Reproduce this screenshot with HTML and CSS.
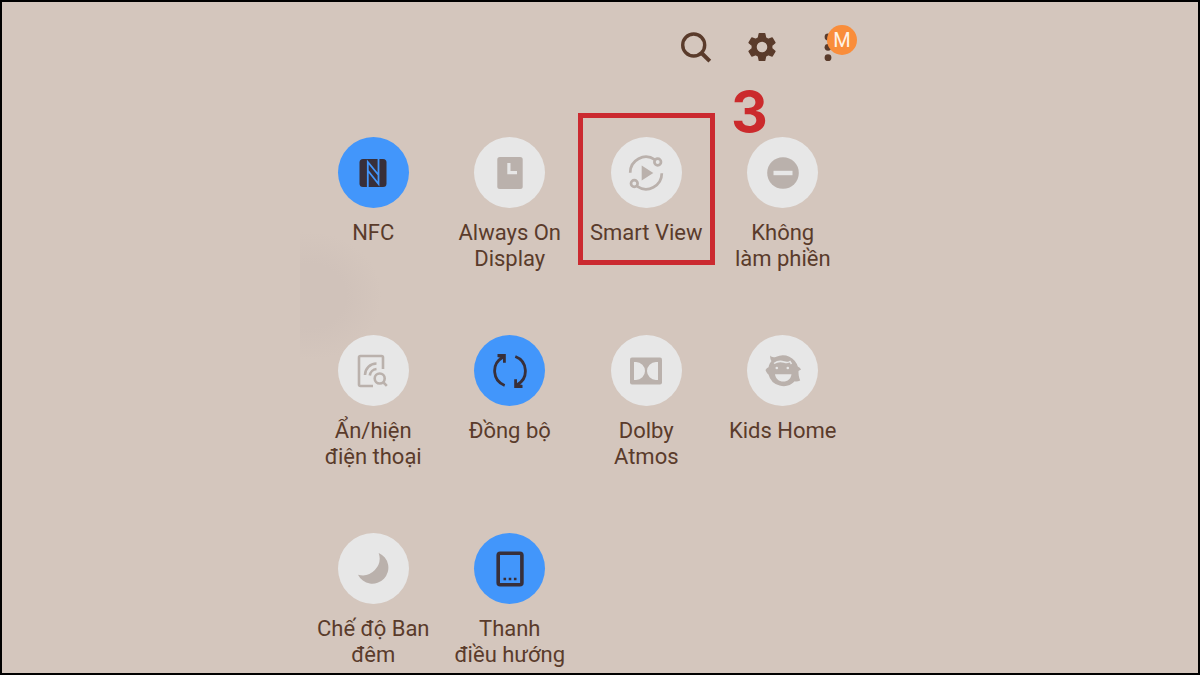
FILE: index.html
```html
<!DOCTYPE html>
<html lang="vi">
<head>
<meta charset="utf-8">
<meta name="viewport" content="width=device-width, initial-scale=1">
<title>Smart View</title>
<link rel="stylesheet" href="styles.css">
</head>
<body>
<main class="panel">
  <header class="toolbar">
    <button class="tool" type="button" aria-label="Search">
      <svg viewBox="0 0 32 32" fill="none" stroke="currentColor" stroke-width="3.4"><circle cx="13.7" cy="14" r="11"/><path d="M21.5 22l8.3 8.2" stroke-width="4"/></svg>
    </button>
    <button class="tool" type="button" aria-label="Settings">
      <svg viewBox="0 0 32 32" fill="currentColor"><path fill-rule="evenodd" stroke="currentColor" stroke-width="1.4" stroke-linejoin="round" d="M13.3 2.7h5.4l.9 4.2 2.6 1.5 4-1.4 2.7 4.7-3.2 2.8v3l3.2 2.8-2.7 4.7-4-1.4-2.6 1.5-.9 4.2h-5.4l-.9-4.2-2.6-1.5-4 1.4-2.7-4.7 3.2-2.8v-3l-3.2-2.8L5.8 7l4 1.4 2.6-1.5zM16 10a6 6 0 1 0 0 12a6 6 0 1 0 0-12z"/></svg>
    </button>
    <button class="tool" type="button" aria-label="More">
      <svg viewBox="0 0 32 32" fill="currentColor"><circle cx="16" cy="6" r="3.4"/><circle cx="16" cy="16.3" r="3.4"/><circle cx="16" cy="26.7" r="3.4"/></svg>
      <span class="badge">M</span>
    </button>
  </header>

  <section class="tiles">
    <button class="tile" type="button">
      <span class="disc on"><svg viewBox="0 0 44 44"><rect x="8.5" y="8" width="27" height="28" rx="3.5" fill="currentColor"/><path d="M16.800 36.500V11l10.700 13M27.500 7.500V33L16.800 19.500" fill="none" stroke="#4296fb" stroke-width="1.800"/></svg></span>
      <span class="label">NFC</span>
    </button>
    <button class="tile" type="button">
      <span class="disc"><svg viewBox="0 0 44 44" fill="currentColor"><rect x="9.3" y="6" width="25.4" height="32" rx="2.5"/><path d="M19.3 12h3.2v8h6.5v3.3h-9.7z" fill="#e7e7e7"/></svg></span>
      <span class="label">Always On<br>Display</span>
    </button>
    <button class="tile marked" type="button">
      <span class="disc"><svg viewBox="0 0 44 44" fill="none" stroke="currentColor" stroke-width="2.7"><path d="M6.2 21.7A15.8 15.8 0 0 1 30.8 8.6M37.8 22.3A15.8 15.8 0 0 1 13.2 35.4"/><circle cx="33.7" cy="11" r="3.3"/><circle cx="10.3" cy="32.5" r="3.3"/><path d="M17.7 14.5v15l11.6-7.5z" fill="currentColor" stroke="none"/></svg></span>
      <span class="label">Smart View</span>
      <span class="step">3</span>
    </button>
    <button class="tile" type="button">
      <span class="disc"><svg viewBox="0 0 44 44"><circle cx="22" cy="22" r="15.8" fill="currentColor"/><path d="M12.5 19.8h19v4.4h-19z" fill="#e7e7e7"/></svg></span>
      <span class="label">Không<br>làm phiền</span>
    </button>
    <button class="tile" type="button">
      <span class="disc"><svg viewBox="0 0 44 44" fill="none" stroke="currentColor" stroke-width="2.6"><path d="M32 20V8.5A1.5 1.5 0 0 0 30.5 7h-21A1.5 1.5 0 0 0 8 8.5v27A1.5 1.5 0 0 0 9.5 37H22"/><path d="M14 26A11.5 11.5 0 0 1 25.5 14.5M18.8 26.5a7.5 7.5 0 0 1 6.7-6.5"/><circle cx="28.7" cy="29.5" r="5"/><path d="M32 33l3.8 3.8"/></svg></span>
      <span class="label">Ẩn/hiện<br>điện thoại</span>
    </button>
    <button class="tile" type="button">
      <span class="disc on"><svg viewBox="0 0 44 44" fill="none" stroke="currentColor" stroke-width="2.8"><path d="M16.7 36.5A15.5 15.5 0 0 1 14.5 8.5M27.3 7.5A15.5 15.5 0 0 1 29.5 35.5"/><path d="M9.5 5h8.3v8.7h-2.8V9.5L9.500 8zM34.500 39h-8.300v-8.700h2.800v4.200l5.500 1.500z" fill="currentColor" stroke="none"/></svg></span>
      <span class="label">Đồng bộ</span>
    </button>
    <button class="tile" type="button">
      <span class="disc"><svg viewBox="0 0 44 44"><rect x="6" y="8.5" width="32" height="27" rx="2" fill="currentColor"/><path d="M10 13h2a9 9 0 0 1 0 18h-2zM34 13h-2a9 9 0 0 0 0 18h2z" fill="#e7e7e7"/></svg></span>
      <span class="label">Dolby<br>Atmos</span>
    </button>
    <button class="tile" type="button">
      <span class="disc"><svg viewBox="0 0 44 44"><path fill="currentColor" d="M9.300 6.500c1 1.700 3.300 2.200 6 1.200A15.500 15.500 0 0 1 36.800 17.500c1.500.8 2.700 1.800 3.200 3-.8.700-2 1-2.500 1.500 0 3.500.2 6 1.700 9.500-2 1-4 1.200-5.500.8A15.500 15.500 0 0 1 7.500 25.500c-1.200-1-2.500-2.700-3-4.500.8-1.300 1.800-2.300 3-2.800.6-2.500 1.500-4.300 3-6.200-1-1.500-1.500-3.500-1.200-5.500z"/><path d="M13 14.500c4-2.800 7-2.500 10-1.500 2.500.8 4.500.6 6-.5l1.500 2.500" fill="none" stroke="#e7e7e7" stroke-width="1.500"/><g fill="#e7e7e7"><circle cx="15.800" cy="19" r="1.300"/><circle cx="26.800" cy="19" r="1.300"/><path d="M14 25.200h16.500c-.5 4.500-3.800 7.300-8.200 7.300s-7.800-2.800-8.300-7.300z"/></g></svg></span>
      <span class="label">Kids Home</span>
    </button>
    <button class="tile" type="button">
      <span class="disc"><svg viewBox="0 0 44 44" fill="currentColor"><path d="M27.7 6A16 16 0 1 1 7 27.700A17 17 0 0 0 27.700 6z"/></svg></span>
      <span class="label">Chế độ Ban<br>đêm</span>
    </button>
    <button class="tile" type="button">
      <span class="disc on"><svg viewBox="0 0 44 44" fill="none" stroke="currentColor" stroke-width="3.6"><rect x="10.2" y="6.2" width="23.7" height="31.5" rx="2"/><path d="M15.5 32h13" stroke-width="2.6" stroke-dasharray="2.6"/></svg></span>
      <span class="label">Thanh<br>điều hướng</span>
    </button>
  </section>
</main>
</body>
</html>
```
FILE: styles.css
```css
* {
  box-sizing: border-box;
}

body {
  margin: 0;
  min-height: 100vh;
  padding-left: calc(25% - 2px);
  border: 2px solid #000;
  background: #d4c6bd;
  color: #5a3b2b;
  font-family: Roboto, "Noto Sans", sans-serif;
}

button {
  padding: 0;
  border: 0;
  background: none;
  color: inherit;
  font: inherit;
  cursor: pointer;
}

.panel {
  max-width: 580px;
  background: radial-gradient(ellipse 72px 64px at 10px 294px, #d0c2ba 0, #d0c2ba 50%, transparent 100%);
}

.toolbar {
  display: flex;
  justify-content: flex-end;
  gap: 34px;
  padding: 29px 36px 0 0;
}

.tool {
  position: relative;
  width: 32px;
  height: 32px;
}

.tool svg {
  display: block;
  width: 32px;
  height: 32px;
}

.badge {
  position: absolute;
  top: -6px;
  left: 15px;
  width: 30px;
  height: 30px;
  border-radius: 50%;
  background: #f98d3b;
  color: #fff3e6;
  font-size: 20px;
  line-height: 30px;
  text-align: center;
}

.tiles {
  display: grid;
  grid-template-columns: repeat(4, 1fr);
  row-gap: 63px;
  padding: 74px 29px 4px 5px;
}

.tile {
  position: relative;
  display: flex;
  flex-direction: column;
  align-items: center;
  align-self: start;
  gap: 12px;
}

.disc {
  display: grid;
  place-items: center;
  width: 71px;
  height: 71px;
  border-radius: 50%;
  background: #e7e7e7;
  color: #bab1ac;
}

.disc.on {
  background: #4296fb;
  color: #382f39;
}

.disc svg {
  width: 44px;
  height: 44px;
}

.label {
  font-size: 22px;
  line-height: 26px;
  white-space: nowrap;
}

.marked::after {
  content: "";
  position: absolute;
  inset: -24px 0 -19px;
  border: 5px solid #cb2a30;
}

.step {
  position: absolute;
  top: -54px;
  left: 153px;
  color: #cb2a2c;
  font-family: Inter, sans-serif;
  font-size: 57px;
  font-weight: 700;
  line-height: 57px;
}
```
